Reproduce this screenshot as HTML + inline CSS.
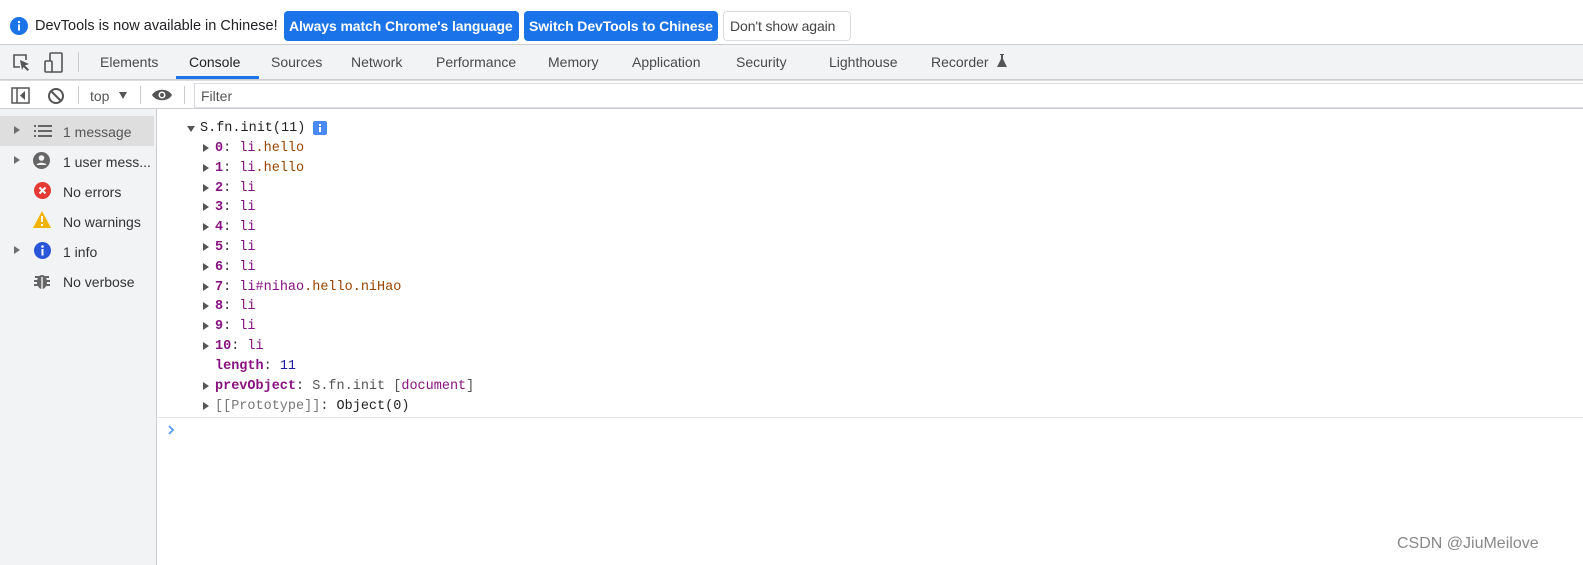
<!DOCTYPE html>
<html><head><meta charset="utf-8"><style>
*{margin:0;padding:0;box-sizing:border-box}
body{width:1583px;height:565px;overflow:hidden;background:#fff;font-family:"Liberation Sans",sans-serif;position:relative;color:#333}
.abs{position:absolute}
.banner{left:0;top:0;width:1583px;height:45px;border-bottom:1px solid #cbcdd1}
.btn{position:absolute;top:11px;height:30px;border-radius:4px;font-size:14px;line-height:30px;padding:0 5px;font-weight:bold;color:#fff;background:#1a73e8;white-space:nowrap;letter-spacing:-0.1px}
.tabs{left:0;top:45px;width:1583px;height:35px;background:#f1f3f4;border-bottom:1px solid #cbcdd1}
.tab{position:absolute;top:9px;font-size:14px;color:#4a4a4a}
.tb{left:0;top:80px;width:1583px;height:29px;border-top:1px solid #dadce0;border-bottom:1px solid #cbcdd1}
.side{left:0;top:109px;width:157px;height:456px;background:#f1f3f4;border-right:1px solid #cbcdd1}
.srow{position:absolute;left:0;width:154px;height:30px;font-size:14px;color:#333}
.srow span.t{position:absolute;left:63px;top:8px;white-space:nowrap}
.tri{position:absolute;left:14px;top:10px;width:0;height:0;border-left:6px solid #6e6e6e;border-top:4.5px solid transparent;border-bottom:4.5px solid transparent}
.mono{font-family:"Liberation Mono",monospace;font-size:13.5px;position:absolute;white-space:pre;line-height:20px}
.k{color:#881280;font-weight:bold}
.v{color:#881280}
.cl{color:#994500}
.n{color:#1a1aa6}
.g{color:#555}
.ct{position:absolute;width:0;height:0;border-left:6px solid #555;border-top:4.5px solid transparent;border-bottom:4.5px solid transparent}
</style></head><body>
<div class="abs banner">
 <svg class="abs" style="left:10px;top:17px" width="18" height="18" viewBox="0 0 18 18"><circle cx="9" cy="9" r="9" fill="#1a73e8"/><rect x="8" y="7.5" width="2" height="6" fill="#fff"/><circle cx="9" cy="5" r="1.2" fill="#fff"/></svg>
 <div class="abs" style="left:35px;top:18px;font-size:14.5px;color:#202124">DevTools is now available in Chinese!</div>
 <div class="btn" style="left:284px;width:235px">Always match Chrome's language</div>
 <div class="btn" style="left:524px;width:194px">Switch DevTools to Chinese</div>
 <div class="btn" style="left:723px;width:128px;background:#fff;color:#444;font-weight:normal;border:1px solid #dadce0;line-height:28px;padding:0 6px">Don't show again</div>
</div>
<div class="abs tabs">
 <svg class="abs" style="left:12px;top:8px" width="20" height="20" viewBox="0 0 20 20"><path d="M8 14H2V2h12v5" fill="none" stroke="#555" stroke-width="1.6"/><path d="M8 7l9 4-4 1.5 4 4-1.5 1.5-4-4L10 17z" fill="#555"/></svg>
 <svg class="abs" style="left:44px;top:7px" width="22" height="22" viewBox="0 0 22 22"><rect x="6" y="1" width="12" height="19" rx="1" fill="none" stroke="#555" stroke-width="1.6"/><rect x="1" y="9" width="7" height="11" rx="1" fill="#f1f3f4" stroke="#555" stroke-width="1.6"/></svg>
 <div class="abs" style="left:78px;top:7px;width:1px;height:20px;background:#ccc"></div>
 <div class="tab" style="left:100px">Elements</div>
 <div class="tab" style="left:189px;color:#202124">Console</div>
 <div class="abs" style="left:176px;top:31px;width:83px;height:3px;background:#1a73e8"></div>
 <div class="tab" style="left:271px">Sources</div>
 <div class="tab" style="left:351px">Network</div>
 <div class="tab" style="left:436px">Performance</div>
 <div class="tab" style="left:548px">Memory</div>
 <div class="tab" style="left:632px">Application</div>
 <div class="tab" style="left:736px">Security</div>
 <div class="tab" style="left:829px">Lighthouse</div>
 <div class="tab" style="left:931px">Recorder</div>
 <svg class="abs" style="left:996px;top:9px" width="12" height="14" viewBox="0 0 12 14"><path d="M4 0h4v1H7v4l4 8H1l4-8V1H4z" fill="#555"/></svg>
</div>
<div class="abs tb">
 <svg class="abs" style="left:11px;top:6px" width="19" height="17" viewBox="0 0 19 17"><rect x="1" y="1" width="17" height="15" fill="none" stroke="#555" stroke-width="1.5"/><line x1="6" y1="1" x2="6" y2="16" stroke="#555" stroke-width="1.5"/><path d="M14 4v9l-5-4.5z" fill="#555"/></svg>
 <svg class="abs" style="left:47px;top:6px" width="18" height="18" viewBox="0 0 18 18"><circle cx="9" cy="9" r="7" fill="none" stroke="#555" stroke-width="2"/><line x1="4" y1="4" x2="14" y2="14" stroke="#555" stroke-width="2"/></svg>
 <div class="abs" style="left:78px;top:5px;width:1px;height:18px;background:#ccc"></div>
 <div class="abs" style="left:90px;top:7px;font-size:14px;color:#555">top</div>
 <div class="abs" style="left:119px;top:11px;border-top:7px solid #555;border-left:4px solid transparent;border-right:4px solid transparent"></div>
 <div class="abs" style="left:140px;top:5px;width:1px;height:18px;background:#ccc"></div>
 <svg class="abs" style="left:151px;top:7px" width="22" height="14" viewBox="0 0 22 14"><path d="M1 7C5 0 17 0 21 7C17 14 5 14 1 7z" fill="#555"/><circle cx="11" cy="7" r="3.5" fill="#fff"/><circle cx="11" cy="7" r="2" fill="#555"/></svg>
 <div class="abs" style="left:184px;top:5px;width:1px;height:18px;background:#ccc"></div>
 <div class="abs" style="left:194px;top:2px;width:1389px;height:25px;border:1px solid #dadce0;border-right:none"></div>
 <div class="abs" style="left:201px;top:7px;font-size:14px;color:#555">Filter</div>
</div>
<div class="abs side">
 <div class="srow" style="top:7px;background:#dedede"><div class="tri"></div>
  <svg class="abs" style="left:34px;top:9px" width="18" height="12" viewBox="0 0 18 12"><g fill="#666"><rect x="0" y="0" width="2" height="2"/><rect x="4" y="0" width="14" height="2"/><rect x="0" y="5" width="2" height="2"/><rect x="4" y="5" width="14" height="2"/><rect x="0" y="10" width="2" height="2"/><rect x="4" y="10" width="14" height="2"/></g></svg>
  <span class="t" style="color:#555">1 message</span></div>
 <div class="srow" style="top:37px"><div class="tri"></div>
  <svg class="abs" style="left:33px;top:6px" width="17" height="17" viewBox="0 0 17 17"><circle cx="8.5" cy="8.5" r="8.5" fill="#666"/><circle cx="8.5" cy="6" r="2.8" fill="#f1f3f4"/><path d="M3.5 13c1-3 9-3 10 0" fill="#f1f3f4"/></svg>
  <span class="t">1 user mess...</span></div>
 <div class="srow" style="top:67px">
  <svg class="abs" style="left:34px;top:6px" width="17" height="17" viewBox="0 0 17 17"><circle cx="8.5" cy="8.5" r="8.5" fill="#e53935"/><path d="M5.5 5.5l6 6M11.5 5.5l-6 6" stroke="#fff" stroke-width="2"/></svg>
  <span class="t">No errors</span></div>
 <div class="srow" style="top:97px">
  <svg class="abs" style="left:33px;top:5px" width="18" height="17" viewBox="0 0 18 17"><path d="M9 0L18 17H0z" fill="#f2b200"/><rect x="8" y="5" width="2" height="6" fill="#fff"/><rect x="8" y="13" width="2" height="2" fill="#fff"/></svg>
  <span class="t">No warnings</span></div>
 <div class="srow" style="top:127px"><div class="tri"></div>
  <svg class="abs" style="left:34px;top:6px" width="17" height="17" viewBox="0 0 17 17"><circle cx="8.5" cy="8.5" r="8.5" fill="#2a57d8"/><rect x="7.5" y="7" width="2" height="6.5" fill="#fff"/><circle cx="8.5" cy="4.5" r="1.3" fill="#fff"/></svg>
  <span class="t">1 info</span></div>
 <div class="srow" style="top:157px">
  <svg class="abs" style="left:34px;top:6px" width="16" height="18" viewBox="0 0 16 18"><g fill="#666"><ellipse cx="8" cy="10" rx="5" ry="7"/><rect x="0" y="8" width="16" height="2"/><rect x="0" y="12" width="16" height="2"/><rect x="1" y="4" width="14" height="2"/></g><rect x="7.3" y="5" width="1.4" height="12" fill="#f1f3f4"/></svg>
  <span class="t">No verbose</span></div>
</div>
<div class="ct" style="left:187px;top:126px;border-left:4.5px solid transparent;border-right:4.5px solid transparent;border-top:6px solid #555;border-bottom:none"></div>
<div class="mono" style="left:200px;top:119px;color:#222">S.fn.init(11)</div>
<svg class="abs" style="left:313px;top:121px" width="14" height="14" viewBox="0 0 14 14"><rect width="14" height="14" rx="2" fill="#4a8af4"/><rect x="6" y="6" width="2" height="5" fill="#fff"/><rect x="6" y="3" width="2" height="2" fill="#fff"/></svg>
<div class="ct" style="left:203px;top:144px"></div><div class="mono" style="left:215px;top:139px"><span class="k">0</span>: <span class="v">li</span><span class="cl">.hello</span></div>
<div class="ct" style="left:203px;top:164px"></div><div class="mono" style="left:215px;top:159px"><span class="k">1</span>: <span class="v">li</span><span class="cl">.hello</span></div>
<div class="ct" style="left:203px;top:184px"></div><div class="mono" style="left:215px;top:179px"><span class="k">2</span>: <span class="v">li</span></div>
<div class="ct" style="left:203px;top:203px"></div><div class="mono" style="left:215px;top:198px"><span class="k">3</span>: <span class="v">li</span></div>
<div class="ct" style="left:203px;top:223px"></div><div class="mono" style="left:215px;top:218px"><span class="k">4</span>: <span class="v">li</span></div>
<div class="ct" style="left:203px;top:243px"></div><div class="mono" style="left:215px;top:238px"><span class="k">5</span>: <span class="v">li</span></div>
<div class="ct" style="left:203px;top:263px"></div><div class="mono" style="left:215px;top:258px"><span class="k">6</span>: <span class="v">li</span></div>
<div class="ct" style="left:203px;top:283px"></div><div class="mono" style="left:215px;top:278px"><span class="k">7</span>: <span class="v">li#nihao</span><span class="cl">.hello.niHao</span></div>
<div class="ct" style="left:203px;top:302px"></div><div class="mono" style="left:215px;top:297px"><span class="k">8</span>: <span class="v">li</span></div>
<div class="ct" style="left:203px;top:322px"></div><div class="mono" style="left:215px;top:317px"><span class="k">9</span>: <span class="v">li</span></div>
<div class="ct" style="left:203px;top:342px"></div><div class="mono" style="left:215px;top:337px"><span class="k">10</span>: <span class="v">li</span></div>
<div class="mono" style="left:215px;top:357px"><span class="k">length</span>: <span class="n">11</span></div>
<div class="ct" style="left:203px;top:382px"></div><div class="mono" style="left:215px;top:377px"><span class="k">prevObject</span>: <span class="g">S.fn.init [</span><span class="v">document</span><span class="g">]</span></div>
<div class="ct" style="left:203px;top:402px"></div><div class="mono" style="left:215px;top:397px"><span style="color:#777">[[Prototype]]</span>: <span style="color:#222">Object(0)</span></div>
<div class="abs" style="left:157px;top:417px;width:1426px;height:1px;background:#e6e6e6"></div>
<svg class="abs" style="left:167px;top:424px" width="8" height="12" viewBox="0 0 8 12"><path d="M2 2l4 4-4 4" fill="none" stroke="#5b9cf4" stroke-width="1.8"/></svg>
<div class="abs" style="left:1397px;top:535px;font-size:16px;color:#888">CSDN @JiuMeilove</div>
</body></html>
